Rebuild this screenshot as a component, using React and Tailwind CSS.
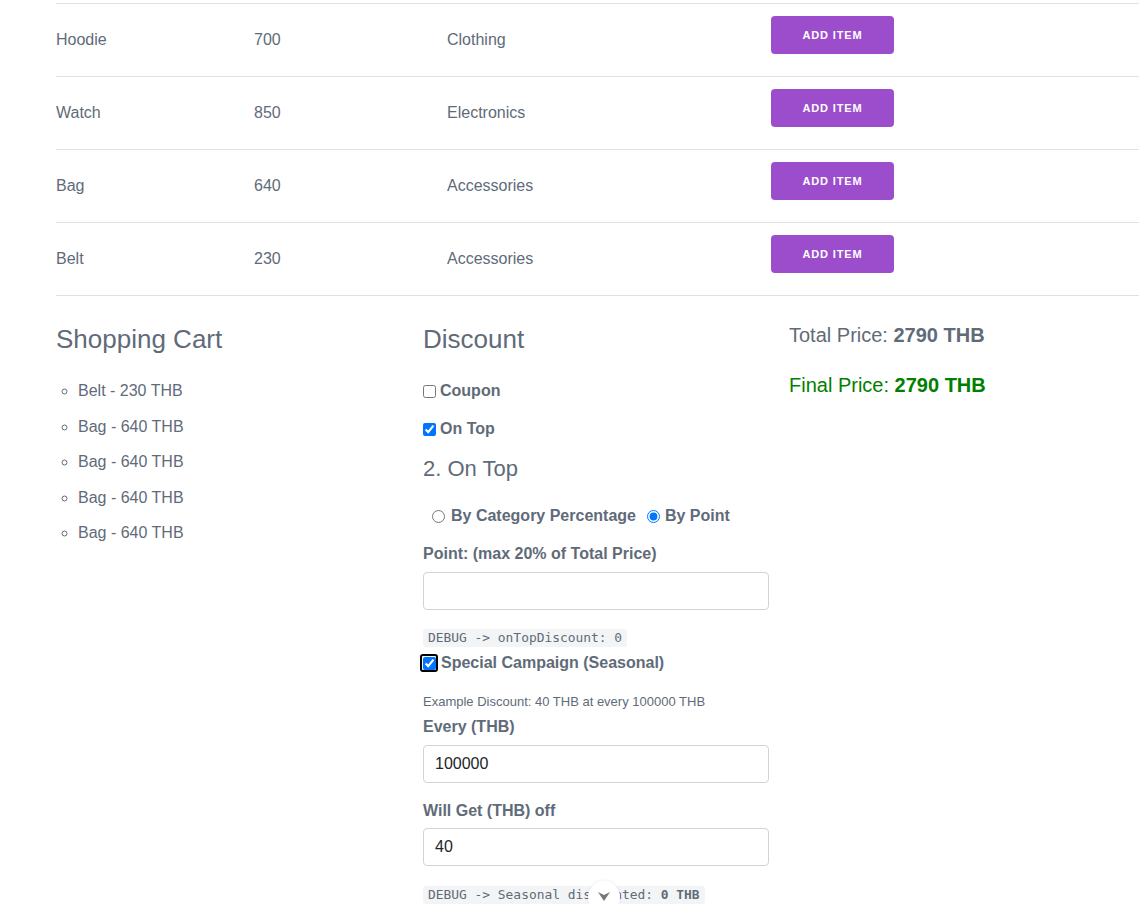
import React from "react";

const products = [
    { name: "Hoodie", price: 700, category: "Clothing" },
    { name: "Watch", price: 850, category: "Electronics" },
    { name: "Bag", price: 640, category: "Accessories" },
    { name: "Belt", price: 230, category: "Accessories" },
];

const cart = [
    { name: "Belt", price: 230 },
    { name: "Bag", price: 640 },
    { name: "Bag", price: 640 },
    { name: "Bag", price: 640 },
    { name: "Bag", price: 640 },
];

const noop = () => {};

export default function App() {
    return (
        <div className="relative h-[904px] w-[1139px] overflow-hidden bg-white font-['Liberation_Sans',Arial,sans-serif] text-[#5f6b79]">
            <div className="ml-[56px] w-[1100px] pt-[3px]">
                {/* product table */}
                <div className="border-b border-[#dee2e6]">
                    {products.map((p) => (
                        <div key={p.name} className="flex h-[73px] border-t border-[#dee2e6] text-base">
                            <div className="flex w-[198px] items-center">{p.name}</div>
                            <div className="flex w-[193px] items-center">{p.price}</div>
                            <div className="flex w-[324px] items-center">{p.category}</div>
                            <div className="pt-[12px]">
                                <button className="h-[38px] w-[123px] rounded-[4px] bg-[#9c4dcc] pt-[1px] text-[11px] font-bold tracking-[0.08em] text-white uppercase">
                                    Add Item
                                </button>
                            </div>
                        </div>
                    ))}
                </div>

                {/* cart / discount / total */}
                <div className="grid grid-cols-[367px_366px_367px] pt-[26px]">
                    <div>
                        <h2 className="text-[26px] leading-[34px] font-light">Shopping Cart</h2>
                        <ul className="mt-[23px] list-[circle] pl-[22px] text-base">
                            {cart.map((c, i) => (
                                <li key={i} className="mb-[11.5px] leading-6">
                                    {c.name} - {c.price} THB
                                </li>
                            ))}
                        </ul>
                    </div>

                    <div className="w-[346px]">
                        <h2 className="text-[26px] leading-[34px] font-light">Discount</h2>
                        <label className="mt-[25px] flex h-5 items-center text-base font-bold">
                            <input type="checkbox" className="mr-[4px] ml-0 h-[13px] w-[13px]" onChange={noop} />
                            Coupon
                        </label>
                        <label className="mt-[18px] flex h-5 items-center text-base font-bold">
                            <input type="checkbox" checked className="mr-[4px] ml-0 h-[13px] w-[13px]" onChange={noop} />
                            On Top
                        </label>
                        <h3 className="mt-[17px] text-[22px] leading-[26px] font-light">2. On Top</h3>
                        <div className="mt-[24px] flex h-5 items-center pl-[9px] text-base font-bold">
                            <input type="radio" name="ontop" className="mr-[6px] h-[13px] w-[13px]" onChange={noop} />
                            <span className="mr-[11px]">By Category Percentage</span>
                            <input type="radio" name="ontop" checked className="mr-[5px] h-[13px] w-[13px]" onChange={noop} />
                            <span>By Point</span>
                        </div>
                        <div className="mt-[18px] h-5 text-base leading-5 font-bold">Point: (max 20% of Total Price)</div>
                        <input className="mt-[8px] block h-[38px] w-full rounded-[4px] border border-[#ced4da] px-3 text-base text-[#212529]" />
                        <div className="mt-[19px] inline-block h-[18px] rounded-[3px] bg-[#f3f4f5] px-[5px] font-['DejaVu_Sans_Mono',monospace] text-[12.9px] leading-[18px] text-[#5f6b79]">
                            DEBUG -&gt; onTopDiscount: 0
                        </div>
                        <label className="mt-[4px] flex h-5 items-center text-base font-bold">
                            <span className="mr-[3px] -ml-[3px] flex h-[18px] w-[18px] items-center justify-center rounded-[3px] border-2 border-black">
                                <input type="checkbox" checked className="m-0 h-[13px] w-[13px]" onChange={noop} />
                            </span>
                            Special Campaign (Seasonal)
                        </label>
                        <div className="mt-[21px] h-[15px] text-[13px] leading-[15px]">Example Discount: 40 THB at every 100000 THB</div>
                        <div className="mt-[8px] h-5 text-base leading-5 font-bold">Every (THB)</div>
                        <input value="100000" onChange={noop} className="mt-[8px] block h-[38px] w-full rounded-[4px] border border-[#ced4da] px-[11px] text-base text-[#212529]" />
                        <div className="mt-[18px] h-5 text-base leading-5 font-bold">Will Get (THB) off</div>
                        <input value="40" onChange={noop} className="mt-[7px] block h-[38px] w-full rounded-[4px] border border-[#ced4da] px-[11px] text-base text-[#212529]" />
                        <div className="mt-[20px] inline-block h-[18px] rounded-[3px] bg-[#f3f4f5] px-[5px] font-['DejaVu_Sans_Mono',monospace] text-[12.9px] leading-[18px] text-[#5f6b79]">
                            DEBUG -&gt; Seasonal discounted: <b>0 THB</b>
                        </div>
                    </div>

                    <div>
                        <div className="mt-[1px] text-[20px] leading-6">
                            Total Price: <b>2790 THB</b>
                        </div>
                        <div className="mt-[26px] text-[20px] leading-6 text-[#008000]">
                            Final Price: <b>2790 THB</b>
                        </div>
                    </div>
                </div>
            </div>

            {/* scroll-down hint */}
            <div className="absolute top-[881px] left-[588px] flex h-[32px] w-[32px] items-start justify-center rounded-full bg-white pt-[10px] shadow-[0_0_4px_rgba(0,0,0,0.08)]">
                <svg width="14" height="11" viewBox="0 0 14 11">
                    <path d="M1 1 L7 10 L13 1 L7 4 Z" fill="#777" />
                </svg>
            </div>
        </div>
    );
}
